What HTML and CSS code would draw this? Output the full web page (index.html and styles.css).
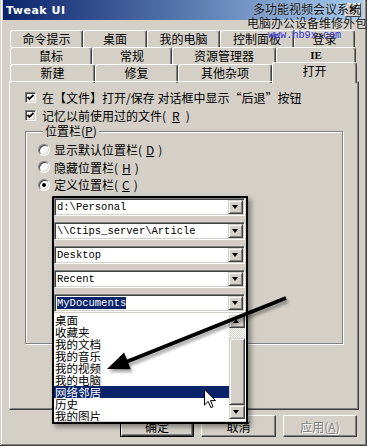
FILE: index.html
```html
<!DOCTYPE html>
<html lang="zh-CN">

<head>
    <meta charset="UTF-8">
    <meta name="viewport" content="width=device-width, initial-scale=1.0">
    <title>Tweak UI</title>
    <link rel="stylesheet" href="styles.css">
</head>

<body>
    <div class="window">
        <!-- Title bar -->
        <div class="titlebar">
            <span class="title">Tweak UI</span>
            <span class="close-btn">×</span>
        </div>

        <div class="sheet">
            <!-- Tabs -->
            <div class="tabs">
                <div class="tab-row row1">
                    <div class="tab">命令提示</div>
                    <div class="tab">桌面</div>
                    <div class="tab">我的电脑</div>
                    <div class="tab">控制面板</div>
                    <div class="tab">登录</div>
                </div>
                <div class="tab-row row2">
                    <div class="tab">鼠标</div>
                    <div class="tab">常规</div>
                    <div class="tab">资源管理器</div>
                    <div class="tab tab-latin">IE</div>
                </div>
                <div class="tab-row row3">
                    <div class="tab">新建</div>
                    <div class="tab">修复</div>
                    <div class="tab">其他杂项</div>
                    <div class="tab active">打开</div>
                </div>
            </div>

            <!-- Page -->
            <div class="panel">
                <div class="check-row">
                    <span class="checkbox"><svg width="7" height="7" viewBox="0 0 7 7"><path d="M0.5 3 L2.5 5 L6.5 1" fill="none" stroke="#000" stroke-width="1.8"/></svg></span>
                    在【文件】打开/保存 对话框中显示“后退”按钮
                </div>
                <div class="check-row">
                    <span class="checkbox"><svg width="7" height="7" viewBox="0 0 7 7"><path d="M0.5 3 L2.5 5 L6.5 1" fill="none" stroke="#000" stroke-width="1.8"/></svg></span>
                    记忆以前使用过的文件(<u>R</u>)
                </div>

                <fieldset class="group">
                    <legend>位置栏(<u>P</u>)</legend>
                    <div class="radio-row"><span class="radio"></span>显示默认位置栏(<u>D</u>)</div>
                    <div class="radio-row"><span class="radio"></span>隐藏位置栏(<u>H</u>)</div>
                    <div class="radio-row"><span class="radio checked"></span>定义位置栏(<u>C</u>)</div>
                </fieldset>
            </div>

            <!-- Dialog buttons -->
            <div class="buttons">
                <button class="btn default">确定</button>
                <button class="btn wide">取消</button>
                <button class="btn disabled">应用(<u>A</u>)</button>
            </div>
        </div>

        <!-- Watermark -->
        <div class="watermark">
            <div class="wm-line wm-1">多功能视频会议系统</div>
            <div class="wm-line">电脑办公设备维修外包</div>
            <div class="wm-line wm-url">www.hb9x.com</div>
        </div>

        <!-- Pasted picture of the place bar combos -->
        <div class="overlay">
            <div class="combos">
                <div class="combo"><span class="combo-text">d:\Personal</span><span class="combo-btn"></span></div>
                <div class="combo"><span class="combo-text">\\Ctips_server\Article</span><span class="combo-btn"></span></div>
                <div class="combo"><span class="combo-text">Desktop</span><span class="combo-btn"></span></div>
                <div class="combo"><span class="combo-text">Recent</span><span class="combo-btn"></span></div>
                <div class="combo"><span class="combo-text"><span class="sel">MyDocuments</span></span><span class="combo-btn"></span></div>
            </div>
            <div class="list">
                <div class="items">
                    <div class="item">桌面</div>
                    <div class="item">收藏夹</div>
                    <div class="item">我的文档</div>
                    <div class="item">我的音乐</div>
                    <div class="item">我的视频</div>
                    <div class="item">我的电脑</div>
                    <div class="item selected">网络邻居</div>
                    <div class="item">历史</div>
                    <div class="item">我的图片</div>
                </div>
                <div class="scrollbar">
                    <div class="sb-btn up"></div>
                    <div class="sb-track"></div>
                    <div class="sb-thumb"></div>
                    <div class="sb-btn down"></div>
                </div>
            </div>
        </div>

        <!-- Arrow drawn on top -->
        <svg class="arrow" width="367" height="446" viewBox="0 0 367 446">
            <defs>
                <filter id="shade" x="-20%" y="-20%" width="140%" height="140%">
                    <feDropShadow dx="2" dy="3" stdDeviation="1.5" flood-color="#000" flood-opacity="0.35"/>
                </filter>
            </defs>
            <g filter="url(#shade)">
                <line x1="286" y1="298" x2="126" y2="362" stroke="#000" stroke-width="4"/>
                <polygon points="107,369 130.7,369.2 124.1,352.4" fill="#000"/>
            </g>
        </svg>

        <!-- Mouse pointer -->
        <svg class="pointer" width="13" height="21" viewBox="0 0 13 21">
            <path d="M0.5 0.5 L0.5 16 L4.2 12.4 L6.8 18.6 L9 17.6 L6.5 11.6 L11.5 11.6 Z" fill="#fff" stroke="#000" stroke-width="1"/>
        </svg>
    </div>
</body>

</html>
```

FILE: styles.css
```css
/* General */
* {
    margin: 0;
    padding: 0;
    box-sizing: border-box;
}

body {
    width: 367px;
    height: 446px;
    overflow: hidden;
    background: #d4d0c8;
    font-family: "Noto Sans CJK SC", "Liberation Sans", sans-serif;
    font-size: 12px;
    color: #000;
}

u {
    text-decoration: underline;
}

/* Window frame */
.window {
    position: relative;
    width: 367px;
    height: 446px;
    padding: 0 4px 4px 3px;
    background: #d4d0c8;
    box-shadow: inset -1px -1px #404040, inset 1px 0 #d4d0c8, inset -2px -2px #808080, inset 2px 0 #fff;
}

.titlebar {
    height: 20px;
    display: flex;
    align-items: center;
    padding: 0 2px 0 3px;
    background: linear-gradient(90deg, #0a246a, #a6caf0);
}

.title {
    color: #fff;
    font: bold 11px "DejaVu Sans", sans-serif;
    letter-spacing: 0.5px;
}

.close-btn {
    margin-left: auto;
    width: 16px;
    height: 14px;
    background: #d4d0c8;
    border: 1px solid;
    border-color: #fff #404040 #404040 #fff;
    font: bold 12px/11px "DejaVu Sans", sans-serif;
    text-align: center;
}

.sheet {
    padding: 10px 0 0 6px;
}

/* Tabs */
.tabs {
    margin-left: 1px;
    width: 347px;
}

.tab-row {
    display: grid;
    height: 17px;
}

.row1 {
    grid-template-columns: 73px 64px 73px 74px 61px;
}

.row2 {
    grid-template-columns: 82px 80px 104px 80px;
}

.row3 {
    grid-template-columns: 85px 83px 94px 85px;
}

.tab {
    background: #d4d0c8;
    border: 1px solid;
    border-bottom: 0;
    border-color: #fff #404040 #fff #fff;
    border-radius: 3px 3px 0 0;
    box-shadow: inset -1px 0 #808080;
    text-align: center;
    line-height: 15px;
    white-space: nowrap;
}

.tab-latin {
    font: bold 11px/15px "Liberation Serif", serif;
}

.tab.active {
    position: relative;
    z-index: 2;
    height: 21px;
    margin-top: -2px;
    line-height: 16px;
}

/* Page */
.panel {
    position: relative;
    z-index: 1;
    width: 350px;
    height: 329px;
    border: 1px solid;
    border-color: #fff #404040 #404040 #fff;
    box-shadow: inset -1px -1px #808080;
    padding: 6px 0 0 15px;
}

.check-row {
    display: flex;
    align-items: center;
    gap: 6px;
    height: 18px;
    white-space: nowrap;
}

.checkbox {
    width: 11px;
    height: 11px;
    display: flex;
    align-items: center;
    justify-content: center;
    background: #fff;
    border: 1px solid;
    border-color: #808080 #fff #fff #808080;
    box-shadow: inset 1px 1px #404040, inset -1px -1px #d4d0c8;
}

.group {
    width: 318px;
    height: 220px;
    min-width: 0;
    border: 1px solid #808080;
    box-shadow: inset 1px 1px #fff, 1px 1px #fff;
    padding: 3px 0 0 12px;
}

.group legend {
    margin-left: 5px;
    padding: 0 2px;
    line-height: 14px;
    background: #d4d0c8;
}

.radio-row {
    display: flex;
    align-items: center;
    gap: 4px;
    height: 17.5px;
}

.radio {
    position: relative;
    width: 12px;
    height: 12px;
    border-radius: 50%;
    background: #fff;
    border: 1px solid;
    border-color: #808080 #fff #fff #808080;
    box-shadow: inset 1px 1px #404040, inset -1px -1px #d4d0c8;
}

.radio.checked::after {
    content: "";
    position: absolute;
    left: 3px;
    top: 3px;
    width: 4px;
    height: 4px;
    border-radius: 50%;
    background: #000;
}

/* Dialog buttons */
.buttons {
    width: 350px;
    display: flex;
    justify-content: flex-end;
    gap: 7px;
    margin-top: 5px;
    padding-right: 2px;
}

.btn {
    width: 74px;
    height: 22px;
    font: 12px "Noto Sans CJK SC", sans-serif;
    background: #d4d0c8;
    border: 1px solid;
    border-color: #fff #404040 #404040 #fff;
    box-shadow: inset -1px -1px #808080;
}

.btn.wide {
    width: 75px;
}

.btn.default {
    border-color: #000;
    box-shadow: inset 1px 1px #fff, inset -1px -1px #404040, inset -2px -2px #808080;
}

.btn.disabled {
    color: #808080;
    text-shadow: 1px 1px #fff;
}

/* Watermark */
.watermark {
    position: absolute;
    left: 247px;
    top: 2px;
    font-size: 12px;
    line-height: 14px;
    color: #111;
    text-shadow: 0 0 2px rgba(255, 255, 255, 0.5);
    z-index: 5;
}

.wm-line {
    white-space: nowrap;
}

.wm-1 {
    padding-left: 6px;
}

.wm-url {
    padding-left: 21px;
    font: 10px/11px "Liberation Mono", monospace;
    color: #2a2ad0;
    letter-spacing: 0.1px;
}

/* Pasted combo picture */
.overlay {
    position: absolute;
    left: 52px;
    top: 196px;
    width: 196px;
    height: 228px;
    border: 2px solid #000;
    background: #d4d0c8;
    box-shadow: 3px 3px 5px rgba(0, 0, 0, 0.4);
    z-index: 6;
}

.combos {
    display: flex;
    flex-direction: column;
    gap: 6px;
    width: 191px;
}

.combo {
    height: 18px;
    display: flex;
    align-items: center;
    padding: 1px;
    background: #fff;
    border: 1px solid;
    border-color: #808080 #fff #fff #808080;
    box-shadow: inset 1px 1px #404040, inset -1px -1px #d4d0c8;
}

.combo-text {
    flex: 1;
    padding-left: 1px;
    font: 10.5px/13px "Liberation Mono", monospace;
    white-space: nowrap;
}

.combo-text .sel {
    background: #0a246a;
    color: #fff;
}

.combo-btn,
.sb-btn {
    position: relative;
    width: 15px;
    height: 14px;
    background: #d4d0c8;
    border: 1px solid;
    border-color: #d4d0c8 #404040 #404040 #d4d0c8;
    box-shadow: inset 1px 1px #fff, inset -1px -1px #808080;
}

.combo-btn::after,
.sb-btn::after {
    content: "";
    position: absolute;
    left: 3px;
    top: 4px;
    border-left: 3.5px solid transparent;
    border-right: 3.5px solid transparent;
    border-top: 4px solid #000;
}

.list {
    display: flex;
    width: 192px;
    height: 108px;
    margin-top: 1px;
    background: #fff;
}

.items {
    flex: 1;
    padding-top: 1px;
    overflow: hidden;
}

.item {
    height: 12px;
    font-size: 11.5px;
    line-height: 12px;
    padding-left: 1px;
    white-space: nowrap;
}

.item.selected {
    background: #0a246a;
    color: #fff;
}

.scrollbar {
    width: 16px;
    display: flex;
    flex-direction: column;
    padding: 2px 0;
    margin-right: 1px;
}

.sb-btn {
    width: 16px;
    height: 13px;
}

.sb-btn.up::after {
    top: 3px;
    border-top: 0;
    border-bottom: 4px solid #000;
}

.sb-btn.down {
    height: 14px;
}

.sb-track {
    height: 10px;
    background-color: #fff;
    background-image: conic-gradient(#d4d0c8 25%, #fff 0 50%, #d4d0c8 0 75%, #fff 0);
    background-size: 2px 2px;
}

.sb-thumb {
    flex: 1;
    background: #d4d0c8;
    border: 1px solid;
    border-color: #d4d0c8 #404040 #404040 #d4d0c8;
    box-shadow: inset 1px 1px #fff, inset -1px -1px #808080;
}

/* Arrow and pointer on top */
.arrow {
    position: absolute;
    left: 0;
    top: 0;
    z-index: 7;
    pointer-events: none;
}

.pointer {
    position: absolute;
    left: 204px;
    top: 389px;
    z-index: 8;
}
```
